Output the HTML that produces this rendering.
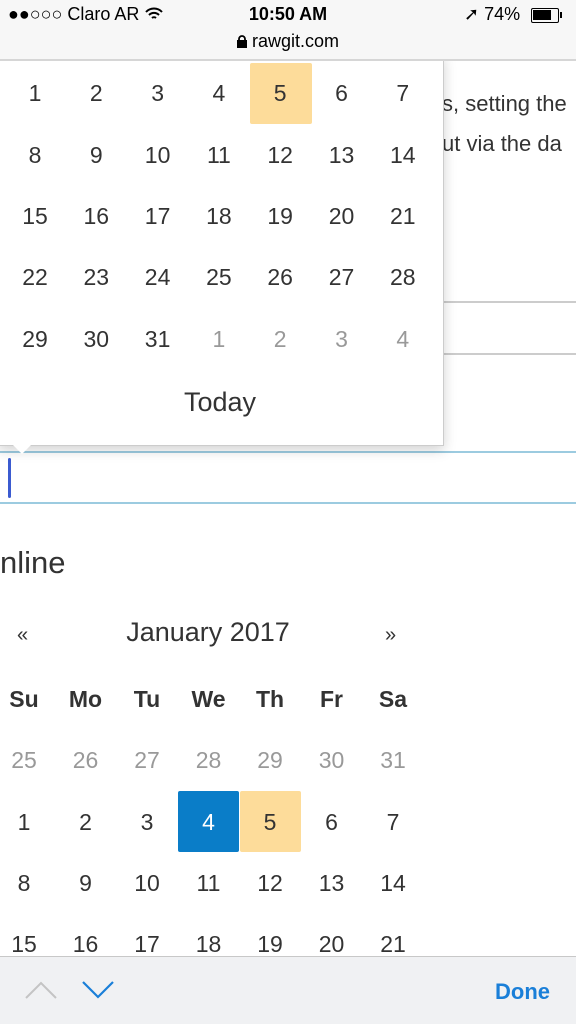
<!DOCTYPE html>
<html><head><style>
*{margin:0;padding:0;box-sizing:border-box}
body{width:576px;height:1024px;overflow:hidden;position:relative;background:#fff;font-family:"Liberation Sans",sans-serif;color:#333}
.a{position:absolute}
.n{position:absolute;width:61px;text-align:center;font-size:23px;line-height:30px;margin-top:-15px}
.g{color:#999}
.b{font-weight:bold}
</style></head><body>
<!-- background content -->
<div class="a" style="left:443px;top:61px;width:140px;height:242px;border-bottom:2px solid #ccc;border-left:1px solid #ccc"></div>
<div class="a" style="left:442px;top:84px;font-size:22px;line-height:40px;color:#333;white-space:nowrap">s, setting the<br>ut via the da</div>
<div class="a" style="left:0;top:353px;width:576px;height:2px;background:#ccc"></div>
<div class="a" style="left:0;top:451px;width:576px;height:53px;border-top:2px solid #9ccbe0;border-bottom:2px solid #9ccbe0"></div>
<div class="a" style="left:8px;top:458px;width:3px;height:40px;background:#3b5bd0;border-radius:2px"></div>
<!-- popup -->
<div class="a" style="left:-2px;top:55px;width:446px;height:391px;background:#fff;border:1px solid #ccc;box-shadow:0 4px 12px rgba(0,0,0,.18)"></div>
<div class="a" style="left:12px;top:444px;width:0;height:0;border-left:10px solid transparent;border-right:10px solid transparent;border-top:10px solid #fff"></div>
<div class="a" style="left:250px;top:63px;width:62px;height:61px;background:#fddc9a;border-radius:2px"></div>
<div id="p1"></div>
<div class="a" style="left:0;width:440px;top:387px;text-align:center;font-size:27px">Today</div>
<!-- status bar -->
<div class="a" style="left:0;top:0;width:576px;height:61px;background:#f7f7f7;border-bottom:2px solid #d6d6d6"></div>
<div class="a" style="left:8px;top:4px;font-size:18px;color:#000">●●○○○ Claro AR
<svg width="20" height="14" viewBox="0 0 20 14" style="vertical-align:-1px"><path d="M2 5a11 11 0 0 1 16 0M5 8a7 7 0 0 1 10 0M8 11a3 3 0 0 1 4 0" stroke="#000" stroke-width="2" fill="none"/></svg></div>
<div class="a" style="left:0;width:576px;top:4px;text-align:center;font-size:18px;font-weight:bold;color:#000">10:50 AM</div>
<div class="a" style="left:0;width:576px;top:31px;text-align:center;font-size:18px;color:#000"><svg width="10" height="13" viewBox="0 0 10 13" style="vertical-align:-1px"><rect x="0" y="5" width="10" height="8" fill="#000"/><path d="M2 6V4a3 3 0 0 1 6 0v2" stroke="#000" stroke-width="1.8" fill="none"/></svg> rawgit.com</div>
<div class="a" style="left:464px;top:4px;font-size:18px;color:#000">➚ 74%</div>
<div class="a" style="left:531px;top:8px;width:28px;height:15px;border:1.5px solid #000;border-radius:2px"><div style="width:18px;height:10px;margin:1px;background:#000"></div></div>
<div class="a" style="left:560px;top:12px;width:2px;height:6px;background:#000"></div>
<!-- calendar 2 -->
<div class="a" style="left:0px;top:545px;font-size:31px">nline</div>
<div class="a" style="left:17px;top:624px;font-size:20px">«</div>
<div class="a" style="left:0;width:416px;top:617px;text-align:center;font-size:27px">January 2017</div>
<div class="a" style="left:385px;top:624px;font-size:20px">»</div>
<div class="a" style="left:178px;top:791px;width:61px;height:61px;background:#0a7dc8;border-radius:2px"></div>
<div class="a" style="left:240px;top:791px;width:61px;height:61px;background:#fddc9a;border-radius:2px"></div>
<div id="p2"></div>
<!-- toolbar -->
<div class="a" style="left:0;top:956px;width:576px;height:68px;background:#f0f1f3;border-top:1px solid #c8c8c8"></div>
<svg class="a" style="left:24px;top:980px" width="34" height="20"><path d="M2 18L17 3L32 18" stroke="#c4c4c4" stroke-width="2" fill="none"/></svg>
<svg class="a" style="left:81px;top:980px" width="34" height="20"><path d="M2 2L17 17L32 2" stroke="#1a7fd8" stroke-width="2.2" fill="none"/></svg>
<div class="a" style="left:495px;top:979px;font-size:22px;font-weight:bold;color:#1a7fd8">Done</div>
<script>
function put(id,x0,dx,rows,ys,cls){var h='';rows.forEach(function(r,i){r.forEach(function(t,j){var c='';if(typeof t==='object'){c=t[1];t=t[0];}h+='<div class="n '+c+' '+(cls||'')+'" style="left:'+(x0+j*dx-30.5)+'px;top:'+ys[i]+'px;'+(c==='w'?'color:#fff':'')+'">'+t+'</div>';});});document.getElementById(id).innerHTML=h;}
put('p1',35,61.3,[[1,2,3,4,5,6,7],[8,9,10,11,12,13,14],[15,16,17,18,19,20,21],[22,23,24,25,26,27,28],[29,30,31,[1,'g'],[2,'g'],[3,'g'],[4,'g']]],[93,155,216,277,339]);
put('p2',24,61.5,[[['Su','b'],['Mo','b'],['Tu','b'],['We','b'],['Th','b'],['Fr','b'],['Sa','b']],[[25,'g'],[26,'g'],[27,'g'],[28,'g'],[29,'g'],[30,'g'],[31,'g']],[1,2,3,[4,'w'],5,6,7],[8,9,10,11,12,13,14],[15,16,17,18,19,20,21]],[699,760,822,883,944]);
</script>
</body></html>
